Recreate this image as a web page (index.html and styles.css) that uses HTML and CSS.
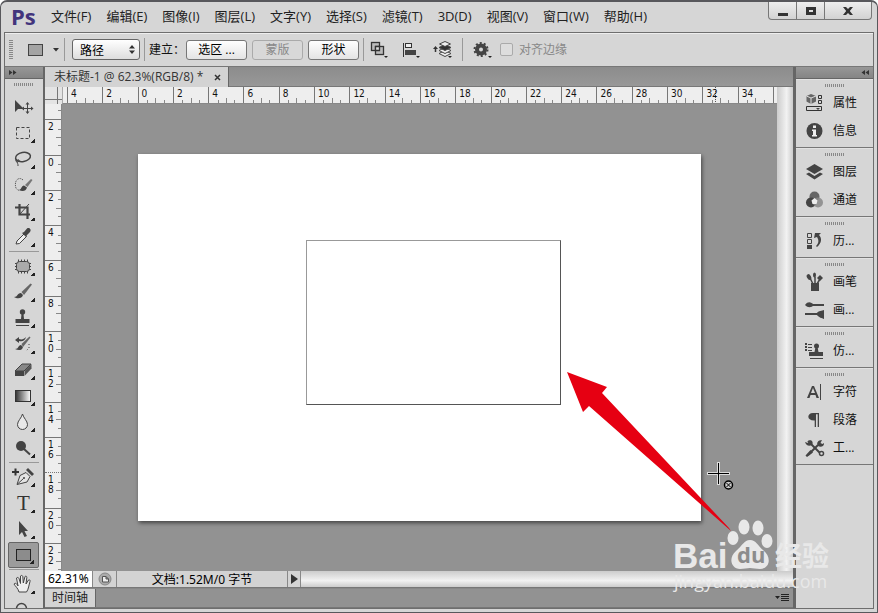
FILE: index.html
```html
<!DOCTYPE html>
<html lang="zh-CN">
<head>
<meta charset="utf-8">
<title>未标题-1</title>
<link rel="stylesheet" href="styles.css">
</head>
<body>
<div class="app">
  <header class="menubar">
    <strong class="logo">Ps</strong>
    <nav class="menus">
      <a href="#">文件(F)</a><a href="#">编辑(E)</a><a href="#">图像(I)</a><a href="#">图层(L)</a><a href="#">文字(Y)</a><a href="#">选择(S)</a><a href="#">滤镜(T)</a><a href="#">3D(D)</a><a href="#">视图(V)</a><a href="#">窗口(W)</a><a href="#">帮助(H)</a>
    </nav>
    <div class="winbtns">
      <button aria-label="最小化"><svg width="12" height="12"><path d="M1 8h10v3H1z"/></svg></button>
      <button aria-label="最大化"><svg width="12" height="12"><path d="M1 2h10v8H1zM4 5v2h4V5z" fill-rule="evenodd"/></svg></button>
      <button aria-label="关闭" class="close"><svg width="12" height="12"><path d="M1 2h3l2 2 2-2h3L7.800 6 11 10H8L6 8l-2 2H1l3.200-4z"/></svg></button>
    </div>
  </header>

  <div class="frame">
    <div class="options">
      <i class="grip-v"></i>
      <button class="flat preset" aria-label="矩形工具"><svg width="34" height="16" viewBox="0 0 34 16"><rect x=".5" y="2.500" width="14" height="11" fill="#a4a4a4" stroke="#444"/><path d="M25 6h6l-3 3.500z" fill="#333"/></svg></button>
      <i class="sep"></i>
      <div class="pick">
        <select aria-label="工具模式"><option>路径</option></select>
        <svg width="6" height="9" viewBox="0 0 6 9"><path d="M0 3.500h6L3 0zM0 5.500h6L3 9z" fill="#333"/></svg>
      </div>
      <i class="sep"></i>
      <span class="make">建立：</span>
      <div class="makers">
        <button class="btn wide">选区 ...</button>
        <button class="btn" disabled>蒙版</button>
        <button class="btn">形状</button>
      </div>
      <i class="sep"></i>
      <div class="ops">
        <button class="flat" aria-label="路径操作"><svg width="20" height="20" viewBox="0 0 20 20"><g fill="#bbb" stroke="#333" stroke-width="1.300"><rect x="2.500" y="2.500" width="8" height="8"/><rect x="6.500" y="6.500" width="8" height="8"/><path d="M6.500 6.500h4v4h-4z" fill="#ddd"/></g><path d="M15 16h4l-2 2z" fill="#222"/></svg></button>
        <button class="flat" aria-label="路径对齐"><svg width="20" height="20" viewBox="0 0 20 20"><path d="M2.500 3v14" stroke="#333"/><rect x="4.500" y="3.500" width="6" height="4" fill="#eee" stroke="#333"/><rect x="4" y="10" width="11" height="5" fill="#444"/><path d="M15 16h4l-2 2z" fill="#222"/></svg></button>
        <button class="flat" aria-label="路径排列"><svg width="20" height="20" viewBox="0 0 20 20"><path d="M2.500 12V8" stroke="#333" stroke-width="1.500"/><path d="M0 9l2.500-3L5 9z" fill="#333"/><g stroke="#444" fill="#eee"><path d="m6 13.500 6 3 6-3-6-3z"/><path d="m6 10.500 6 3 6-3-6-3z"/><path d="m6 7.500 6 3 6-3-6-3z" fill="#333"/><path d="m6.500 4 5.500 2.500L17.500 4 12 1.500z"/></g><path d="M15 16h4l-2 2z" fill="#222"/></svg></button>
      </div>
      <i class="sep"></i>
      <button class="flat gear" aria-label="选项"><svg width="20" height="20" viewBox="0 0 20 20"><circle cx="9" cy="9.500" r="4" fill="none" stroke="#444" stroke-width="4"/><circle cx="9" cy="9.500" r="6.500" fill="none" stroke="#444" stroke-width="2" stroke-dasharray="2 2.080"/><path d="M16 16h4l-2 2z" fill="#222"/></svg></button>
      <label class="align"><input type="checkbox" disabled>对齐边缘</label>
    </div>

    <div class="work">
      <aside class="tools">
        <div class="cap"><svg width="8" height="7" viewBox="0 0 8 7"><path d="m0 1 3.500 2.500L0 6zm4 0 3.500 2.500L4 6z" fill="#333"/></svg></div>
        <i class="grip"></i>
        <div class="toollist">
          <button class="tool" aria-label="移动"><svg viewBox="0 0 32 26"><path d="M8 6v12l3-3h6z"/><path d="M20.500 9v10M16 14.500h9" stroke="#444"/><path d="m18.500 10.500 2-2.500 2 2.500zm0 7 2 2.500 2-2.500zm-1.500-5-2.500 2 2.500 2zm7 0 2.500 2-2.500 2z"/></svg></button>
          <button class="tool sub" aria-label="矩形选框"><svg viewBox="0 0 32 26"><rect x="9.500" y="7.500" width="13" height="11" class="ln" stroke-dasharray="3 2"/></svg></button>
          <button class="tool sub" aria-label="套索"><svg viewBox="0 0 32 26"><ellipse cx="16" cy="11" rx="7.500" ry="4.500" class="ln" stroke-width="1.500" transform="rotate(-10 16 11)"/><path d="M9 13c-1 3 2 4 3 2s-3-1.500-2 1 1 2 1 4" class="ln"/></svg></button>
          <button class="tool sub" aria-label="快速选择"><svg viewBox="0 0 32 26"><path d="M16 8c-3-3-7-1-7.500 3-.5 5 1 7 4.500 7.500" class="ln" stroke-dasharray="1 1"/><path d="M12 18c3-1 2-4 5-4.500l3 2c-1 4-5 4-8 2.500z"/><path d="m18 13 6-6 1.500 1-5 7z" fill="#777"/></svg></button>
          <button class="tool sub" aria-label="裁剪"><svg viewBox="0 0 32 26"><path d="M8 9.500h12.500V21M12.500 6v10.500H23" class="ln" stroke-width="2.200"/><path d="m13 16 9-10" class="ln"/></svg></button>
          <button class="tool sub" aria-label="吸管"><svg viewBox="0 0 32 26"><path d="m9 20 1-3 7-7 2.500 2.500-7 7z" fill="#eee" stroke="#444"/><path d="m15 9 2-1 3-3.500c2-1.500 5 1 3 3.500l-3 3-1 2z"/></svg></button>
          <hr>
          <button class="tool sub" aria-label="修复画笔"><svg viewBox="0 0 32 26"><path d="M11.500 6.500v14m3-14v14m3-14v14m3-14v14M8 10.500h16M8 13.500h16M8 16.500h16" class="ln"/><rect x="9.500" y="8.500" width="13" height="10" rx="3" fill="#aaa" stroke="#444"/></svg></button>
          <button class="tool sub" aria-label="画笔"><svg viewBox="0 0 32 26"><path d="M7 18c4 0 3-4 7-4l2 2c-1 4-6 4-9 2z"/><path d="m14.500 13 9-8.500 1.500 1L17 16z" fill="#666"/></svg></button>
          <button class="tool sub" aria-label="仿制图章"><svg viewBox="0 0 32 26"><circle cx="15.500" cy="7" r="2.700"/><path d="M14.500 9h2l.5 5h5.500v4h-14v-4H14z"/><path d="M9 20.500h13" class="ln"/></svg></button>
          <button class="tool sub" aria-label="历史记录画笔"><svg viewBox="0 0 32 26"><path d="m8 9 4-3v2c3 1 5 0 7-2-1 4-4 5-7 4v2z"/><path d="M8 18c4 0 3-4 6-4l2 2c-1 4-5 3.500-8 2z"/><path d="m14.500 13 8-7.500 1 1L16 16z" fill="#666"/><path d="M22 13v4l-3 3" class="ln" stroke-dasharray="1 2"/></svg></button>
          <button class="tool sub" aria-label="橡皮擦"><svg viewBox="0 0 32 26"><path d="m8 14 7-7h9l-7 7z" fill="#888" stroke="#444"/><path d="M8 14h9v5H8z"/><path d="m17.500 14 7-7v4.500l-7 7.500z" fill="#555"/></svg></button>
          <button class="tool sub" aria-label="渐变"><svg viewBox="0 0 32 26"><defs><linearGradient id="gr"><stop stop-color="#333"/><stop offset="1" stop-color="#fff"/></linearGradient></defs><rect x="8.500" y="7.500" width="15" height="11" fill="url(#gr)" stroke="#333"/></svg></button>
          <button class="tool sub" aria-label="模糊"><svg viewBox="0 0 32 26"><path d="M15.500 5c1 4 5 7 5 10.500a5 5 0 0 1-10 0C10.500 12 14.500 9 15.500 5z" fill="#e8e8e8" stroke="#444"/></svg></button>
          <button class="tool sub" aria-label="减淡"><svg viewBox="0 0 32 26"><circle cx="14" cy="11" r="5"/><path d="m17 14 6 5.500" stroke="#444" stroke-width="2"/></svg></button>
          <hr>
          <button class="tool sub" aria-label="钢笔"><svg viewBox="0 0 32 26"><path d="M5 8h7M8.500 4.500v7" stroke="#333" stroke-width="2"/><path d="m10 20.500 3-9 6-3 4 4-3 5.500z" fill="#e4e4e4" stroke="#444"/><path d="m19 6 2-2 6 6-2 2z"/><path d="m10.500 20 6-5.500" class="ln"/><circle cx="17" cy="14" r="1"/></svg></button>
          <button class="tool sub type" aria-label="文字">T</button>
          <button class="tool sub" aria-label="路径选择"><svg viewBox="0 0 32 26"><path d="M12 5v14l3-3 2.500 5 2.500-1-2.500-5H21z"/></svg></button>
          <button class="tool sub on" aria-label="矩形"><svg viewBox="0 0 32 26"><rect x="9.500" y="7.500" width="14" height="11" fill="#8c8c8c" stroke="#222"/></svg></button>
          <hr>
          <button class="tool sub" aria-label="抓手"><svg viewBox="0 0 32 26"><path d="M12 21c-1-4-4-6-5-8 1-1.500 3-.5 4 2L9.500 7c1-1 2-.5 2.500.500l1.500 5V5c1-1 2-.5 2.300.5l.5 6.500L18 5.500c1-.8 2 0 1.800 1l-.8 6.500 2.500-4c1-.5 2 .2 1.500 1.500-1 3-1.500 8-3.500 10.500z" fill="#eee" stroke="#444"/></svg></button>
          <button class="tool" aria-label="缩放"><svg viewBox="0 0 32 26"><circle cx="14.500" cy="11.500" r="5" class="ln" stroke-width="1.500"/></svg></button>
        </div>
      </aside>

      <main class="doc">
        <div class="tabs"><div class="tab"><span>未标题-1 @ 62.3%(RGB/8) *</span><button class="flat" aria-label="关闭文档"><svg width="7" height="7"><path d="m1 1 5 5m0-5L1 6" stroke="#333" stroke-width="1.500"/></svg></button></div></div>
        <div class="stage">
          <div class="view">
            <div class="origin"></div>
            <div class="hruler"><div class="marks"><span>4</span><span>2</span><span>0</span><span>2</span><span>4</span><span>6</span><span>8</span><span>10</span><span>12</span><span>14</span><span>16</span><span>18</span><span>20</span><span>22</span><span>24</span><span>26</span><span>28</span><span>30</span><span class="here">32</span><span>34</span></div></div>
            <div class="vruler"><span class="first"></span><span>2</span><span>0</span><span>2</span><span>4</span><span>6</span><span>8</span><span>1<br>0</span><span>1<br>2</span><span>1<br>4</span><span>1<br>6</span><span class="here">1<br>8</span><span>2<br>0</span><span class="last">2<br>2</span></div>
            <div class="canvas"><div class="paper"><div class="shape"></div></div></div>
          </div>
          <div class="vscroll"></div>
        </div>
        <div class="status">
          <input class="zoom" aria-label="缩放比例" value="62.31%">
          <span class="cell ico"><svg width="14" height="14" viewBox="0 0 14 14"><circle cx="7" cy="7" r="6" fill="#aaa" stroke="#888"/><path d="M4.500 4.500H8l2.500 2.500v3h-6zM8 4.500V7h2.500" fill="#eee" stroke="#555"/></svg></span>
          <span class="cell info">文档:1.52M/0 字节</span>
          <button class="cell play" aria-label="状态菜单"><svg width="7" height="10"><path d="m0 0 7 5-7 5z" fill="#333"/></svg></button>
          <div class="hscroll"></div>
        </div>
        <div class="timeline">
          <button class="ttab">时间轴</button>
          <svg class="tmenu" width="14" height="8" viewBox="0 0 14 8"><path d="M0 2h5L2.500 5zM6 0h8v1H6zm0 2h8v1H6zm0 2h8v1H6zm0 2h8v1H6z" fill="#222"/></svg>
        </div>
      </main>

      <aside class="panels">
        <div class="cap right"><svg width="8" height="7" viewBox="0 0 8 7"><path d="M4 1 .5 3.500 4 6zm4 0L4.500 3.500 8 6z" fill="#333"/></svg></div>
        <section>
          <i class="grip"></i>
          <button class="panel"><svg viewBox="0 0 20 20"><path d="m6 1 5 2v5.500L6 11 1.500 8.500V3z" fill="#666"/><path d="m1.500 3 4.500 2v6M6 5l5-2" fill="none" stroke="#ddd"/><path d="M13.500 2.500h3v3h-3zm0 5h3v3h-3zm-12 6h15v4h-15z" fill="none" stroke="#333"/><path d="M11 15h4l-2 2z"/></svg>属性</button>
          <button class="panel"><svg viewBox="0 0 20 20"><circle cx="9.500" cy="10" r="8"/><path d="M8 4.500h3v2.500H8zM7 8.500h4v5.500h1v1.500H7V14h1v-4H7z" fill="#eee"/></svg>信息</button>
        </section>
        <section>
          <i class="grip"></i>
          <button class="panel"><svg viewBox="0 0 20 20"><path d="m1 7 8.500-5L18 7l-8.500 5z"/><path d="m1 12 3-1.500 5.500 3.500 5.500-3.500 3 1.500-8.500 5.500z"/></svg>图层</button>
          <button class="panel"><svg viewBox="0 0 20 20"><circle cx="9.500" cy="6.500" r="5" fill="#666"/><circle cx="6" cy="12.500" r="5" fill="#444"/><circle cx="13" cy="12.500" r="5" fill="#888" fill-opacity=".85"/><path d="m9.500 8 3 2.500-1 3.500h-4l-1-3.500z" fill="#eee"/></svg>通道</button>
        </section>
        <section>
          <i class="grip"></i>
          <button class="panel"><svg viewBox="0 0 20 20"><path d="M2.500 2.500h4v4h-4zm0 6h4v4h-4z" fill="none" stroke="#444"/><path d="M2 14h5v4H2zM9 7l1-5h6l-2 2c3 3 3 8-2 12l-1-1c3-3 3-6 1-9z"/></svg>历...</button>
        </section>
        <section>
          <i class="grip"></i>
          <button class="panel"><svg viewBox="0 0 20 20"><path d="M6 11h8v8H6z"/><path d="M8 12 5 6m5 6V5m2 7 3-5" stroke="#444" stroke-width="1.500"/><ellipse cx="4" cy="5" rx="2" ry="3" transform="rotate(-30 4 5)"/><ellipse cx="9.500" cy="3" rx="1.500" ry="2.500"/><path d="m12 6 3-3 3 3-3 3z"/></svg>画笔</button>
          <button class="panel"><svg viewBox="0 0 20 20"><path d="M0 5c3-4 6-3 9 0-3 3-6 3-9 0zm8-1h11v2H8zM0 13h12v2H0z"/><path d="M11 14c3-4 6-3 8-4v9c-2-1-5-1-8-5z"/></svg>画...</button>
        </section>
        <section>
          <i class="grip"></i>
          <button class="panel"><svg viewBox="0 0 20 20"><path d="M0 2h2v2H0zm0 3h2v2H0zm0 3h2v2H0zm3-5h4v1H3zm0 3h4v1H3zm0 3h4v1H3z"/><circle cx="11.500" cy="5" r="2.500"/><path d="M10.500 6h2l1 5H18v4H4v-4h5.500zM5 17h13v1H5z"/></svg>仿...</button>
        </section>
        <section>
          <i class="grip"></i>
          <button class="panel"><svg viewBox="0 0 20 20"><path d="M2 16 7 4h2l5 12h-2.500l-1-3h-5l-1 3zm4-5h4L8 6z" fill-rule="evenodd"/><path d="M15.500 2v16" stroke="#444"/></svg>字符</button>
          <button class="panel"><svg viewBox="0 0 20 20"><path d="M14 3v14h-1.300V4.200H11V17H9.700v-6.500C1.500 11 1.500 3 8 3z"/></svg>段落</button>
          <button class="panel"><svg viewBox="0 0 20 20"><path d="m3 3 13 13" stroke="#444" stroke-width="2"/><path d="m3 17 10-10" stroke="#444" stroke-width="2"/><path d="m2 19-1.500-1.500 5-5.500 2.500 2.500zM0 4l3 1 1.500-3c3 0 4 3 2.500 5C3.500 9 1 7 0 4zm13 4c-2-3 0-6 4-6l-1.500 3 2 1L19 5c.5 3-3 5-6 3z"/><circle cx="16.500" cy="15.500" r="2" fill="#ddd" stroke="#444" stroke-width="1.500"/></svg>工...</button>
        </section>
      </aside>
    </div>
  </div>

  <svg class="overlay" viewBox="0 0 878 613">
    <path d="M567 372 607 387 602 393 729 528 731 531 589 406 583 412z" fill="#e60012"/>
    <path d="M707 473.500h23M718.500 462v23" stroke="#ddd" stroke-width="3"/>
    <path d="M708 473.500h21M718.500 463v21" stroke="#000"/>
    <circle cx="728.500" cy="485" r="4" fill="#ccc" stroke="#000" stroke-width="1.500"/><path d="m726.500 483 4 4m0-4-4 4" stroke="#000"/>
    <g fill="#e8e8e8">
      <ellipse cx="733" cy="538" rx="5.500" ry="7"/><ellipse cx="744" cy="527" rx="5.500" ry="7.500"/><ellipse cx="758" cy="528" rx="5.500" ry="7.500"/><ellipse cx="767" cy="541" rx="5.500" ry="7"/>
      <path d="M750 540c6 0 8 6 13 10 9 7 7 19-3 19-4 0-7-1-10-1s-6 1-10 1c-9 0-12-11-4-18 6-5 8-11 14-11z"/>
      <text x="673" y="568" class="wm-bai">Bai</text>
      <text x="775" y="566" class="wm-cn">经验</text>
      <text x="674" y="588" class="wm-url">jingyan.baidu.com</text>
    </g>
    <text x="737" y="563" class="wm-du">du</text>
  </svg>
</div>
</body>
</html>
```
FILE: styles.css
```css
* { box-sizing: border-box; }
body { margin: 0; background: #fff; color: #222; font: 12px/16px "Open Sans", "Noto Sans CJK SC", sans-serif; }
button { font: inherit; color: inherit; padding: 0; margin: 0; border: 0; background: none; }
svg { display: block; }
i { flex: none; }

.app { position: relative; display: flex; flex-direction: column; height: 100vh; overflow: hidden; background: #d6d6d6; border: 1px solid #58585c; border-top-width: 2px; border-radius: 7px 7px 0 0; }

.menubar { flex: none; display: flex; align-items: center; height: 30px; padding: 0 0 3px 10px; }
.logo { width: 40px; color: #42347c; font: bold 22px/24px "Open Sans", sans-serif; }
.menus { display: flex; gap: 15px; flex: 1; font-size: 13px; line-height: 20px; }
.menus a { color: #222; text-decoration: none; white-space: nowrap; }
.winbtns { display: flex; align-self: flex-start; margin-right: 5px; border: 1px solid #777; border-top: 0; border-radius: 0 0 4px 4px; background: linear-gradient(#eee, #d2d2d2); }
.winbtns button { width: 28px; height: 17px; display: grid; place-items: center; border-right: 1px solid #777; }
.winbtns .close { width: 46px; border: 0; }
.winbtns svg { fill: #333; }

.frame { flex: 1; min-height: 0; display: flex; flex-direction: column; margin: 0 3px 3px 3px; border: 1px solid #6e6e6e; }

.options { flex: none; display: flex; align-items: center; height: 34px; padding-left: 4px; padding-bottom: 1px; border-bottom: 1px solid #777; border-top: 1px solid #eee; }
.grip-v { width: 4px; height: 20px; background: repeating-linear-gradient(#888 0 1px, transparent 1px 2px); }
.flat { display: block; }
.preset { margin: 0 2px 0 15px; }
.sep { width: 1px; height: 23px; background: #999; }
.pick { position: relative; margin: 0 4px 0 7px; }
.pick select { display: block; width: 68px; height: 21px; padding: 0 7px; border: 1px solid #666; border-radius: 3px; background: linear-gradient(#fff, #ddd); appearance: none; color: #000; font: 12px/18px "Noto Sans CJK SC", sans-serif; }
.pick svg { position: absolute; right: 5px; top: 6px; pointer-events: none; }
.make { width: 36px; margin-left: 4px; margin-right: 1px; color: #111; white-space: nowrap; }
.makers { display: flex; gap: 5px; margin-right: 4px; }
.btn { width: 51px; height: 20px; border: 1px solid #777; border-radius: 3px; background: linear-gradient(#fff, #e4e4e4); color: #000; }
.btn.wide { width: 61px; }
.btn:disabled { border-color: #aaa; background: #d8d8d8; color: #888; }
.ops { display: flex; gap: 12px; margin: 0 9px 0 5px; }
.gear { margin-left: 9px; margin-right: 8px; }
.align { display: flex; align-items: center; gap: 6px; color: #888; }
.align input { appearance: none; width: 13px; height: 13px; margin: 0; border: 1px solid #aaa; border-radius: 2px; background: #ddd; }

.work { flex: 1; min-height: 0; display: flex; background: #d6d6d6; }
.cap { flex: none; height: 12px; padding: 2px 4px; background: linear-gradient(#979797, #858585); border-bottom: 1px solid #666; }
.cap.right { display: flex; justify-content: flex-end; }
.grip { display: block; width: 20px; height: 3px; background: repeating-linear-gradient(90deg, #888 0 1px, transparent 1px 2px); }

.tools { flex: none; width: 38px; display: flex; flex-direction: column; overflow: hidden; }
.tools .grip { margin: 4px 0 8px 9px; }
.toollist { flex: 1; min-height: 0; overflow: hidden; padding-left: 3px; }
.tool { position: relative; display: block; width: 31px; height: 26px; border-radius: 2px; }
.tool svg { width: 32px; height: 26px; margin-left: -1px; fill: #444; }
.ln { fill: none; stroke: #444; }
.sub::after { content: ""; position: absolute; right: 4px; bottom: 3px; width: 4px; height: 4px; background: linear-gradient(135deg, transparent 50%, #222 50%); }
.on { background: #9c9c9c; border: 1px solid #666; }
.on svg { margin: -1px 0 0 -2px; }
.type { font: 21px/26px "Liberation Serif", serif; color: #333; }
.toollist hr { height: 1px; margin: 1px 4px 1px 1px; border: 0; background: #999; }

.doc { flex: 1; min-width: 0; display: flex; flex-direction: column; border: solid #666; border-width: 0 3px 0 2px; }
.tabs { flex: none; height: 20px; background: linear-gradient(#8c8c8c, #989898); border-bottom: 1px solid #777; }
.tab { display: flex; align-items: center; justify-content: space-between; width: 184px; height: 20px; padding: 0 7px 0 9px; background: #d3d3d3; border-right: 1px solid #666; white-space: nowrap; color: #333; }
.stage { flex: 1; min-height: 0; display: flex; }
.view { flex: 1; min-width: 0; display: grid; grid-template: 17px minmax(0, 1fr) / 17px minmax(0, 1fr); }
.origin { background: linear-gradient(#777, #777) 0 12px / 100% 1px no-repeat, linear-gradient(#777, #777) 12px 0 / 1px 100% no-repeat, #e4e4e4; }
.hruler { padding: 0 3px 0 4px; background: #eee; border-bottom: 1px solid #888; border-left: 1px solid #aaa; font-family: "DejaVu Sans Condensed", "DejaVu Sans", sans-serif; }
.marks { display: grid; grid-template-columns: repeat(20, minmax(0, 1fr)); height: 16px; border-right: 1px solid #777; }
.hruler span, .vruler span { --t: linear-gradient(#888, #888); font-size: 10px; color: #111; }
.hruler span { padding-left: 3px; line-height: 14px; border-left: 1px solid #777; background: var(--t) 25% 100% / 1px 3px no-repeat, var(--t) 50% 100% / 1px 5px no-repeat, var(--t) 75% 100% / 1px 3px no-repeat; }
.hruler .here { background: repeating-linear-gradient(#555 0 1px, transparent 1px 2px) 12px 0 / 1px 100% no-repeat, var(--t) 25% 100% / 1px 3px no-repeat, var(--t) 50% 100% / 1px 5px no-repeat, var(--t) 75% 100% / 1px 3px no-repeat; }
.vruler { display: grid; min-height: 0; grid-template-rows: minmax(0, 153fr) repeat(12, minmax(0, 353fr)) minmax(0, 281fr); overflow: hidden; background: #eee; border-right: 1px solid #888; font-family: "DejaVu Sans Condensed", "DejaVu Sans", sans-serif; }
.vruler span { padding: 2px 0 0 3px; line-height: 10px; border-top: 1px solid #777; overflow: hidden; background: var(--t) 100% 25% / 3px 1px no-repeat, var(--t) 100% 50% / 5px 1px no-repeat, var(--t) 100% 75% / 3px 1px no-repeat; }
.vruler .first { border: 0; background: var(--t) 100% 40% / 3px 1px no-repeat; }
.vruler .last { background: var(--t) 100% 32% / 3px 1px no-repeat, var(--t) 100% 64% / 5px 1px no-repeat, var(--t) 100% 96% / 3px 1px no-repeat; }
.vruler .here { border-top-style: dotted; }
.canvas { display: grid; place-items: center; background: #929292; }
.paper { position: relative; width: 78.800%; height: 78.500%; background: #fff; box-shadow: 1px 2px 4px #444; }
.shape { position: absolute; left: 29.900%; top: 23.500%; width: 45.300%; height: 45%; border: 1px solid #555; border-left-color: #999; border-top-color: #999; }
.vscroll { flex: none; width: 16px; background: linear-gradient(90deg, #ccc, #f2f2f2 60%, #ccc); }

.status { flex: none; display: flex; height: 17px; border-bottom: 1px solid #777; }
.zoom { width: 48px; height: 16px; padding: 0 0 0 3px; border: 0; border-right: 1px solid #888; background: #fff; color: #000; font: 12px/16px "Noto Sans", sans-serif; }
.cell { display: grid; place-items: center; border-right: 1px solid #888; background: #d3d3d3; color: #000; }
.ico { width: 24px; }
.info { width: 171px; font: 12px/15px "Noto Sans", "Noto Sans CJK SC", sans-serif; }
.play { width: 13px; }
.hscroll { flex: 1; background: linear-gradient(#ccc, #f2f2f2 60%, #ccc); }
.timeline { flex: none; display: flex; align-items: center; justify-content: space-between; height: 20px; border-top: 1px solid #888; background: #929292; border-bottom: 1px solid #777; }
.ttab { align-self: stretch; width: 51px; background: #d3d3d3; border-right: 1px solid #666; }
.tmenu { margin-right: 4px; }

.panels { flex: none; width: 77px; overflow: hidden; }
.panels section { padding: 4px 0 2px; border-bottom: 1px solid #777; border-top: 1px solid #e2e2e2; }
.panels .grip { margin: 0 auto 2px; }
.panel { display: flex; align-items: center; gap: 8px; width: 100%; height: 28px; padding-left: 9px; white-space: nowrap; color: #111; }
.panel svg { width: 20px; height: 20px; fill: #444; }

.overlay { position: absolute; left: -1px; top: -2px; width: 100vw; height: 100vh; pointer-events: none; }
.wm-bai { font: bold 35px "Liberation Sans", sans-serif; }
.wm-cn { font: bold 27px "Noto Sans CJK SC", sans-serif; }
.wm-url { font: 18px "Open Sans", sans-serif; }
.wm-du { font: bold 22px "Open Sans", sans-serif; fill: #8c8c8c; }
```
